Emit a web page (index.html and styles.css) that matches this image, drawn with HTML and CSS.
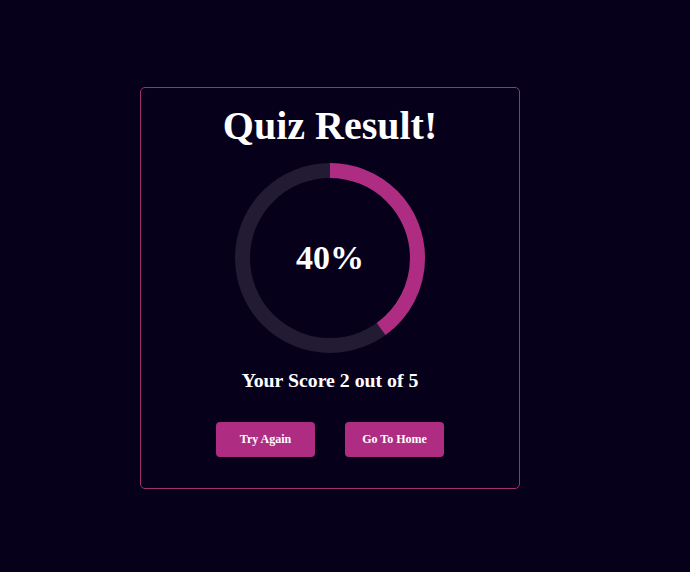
FILE: index.html
```html
<!DOCTYPE html>
<html>
<head>
<meta charset="utf-8">
<link rel="stylesheet" href="styles.css">
</head>
<body>
<div class="page">
  <div class="card">
    <h1 class="title">Quiz Result!</h1>
    <div class="ring">
      <svg width="190" height="190" viewBox="0 0 190 190">
        <circle cx="95" cy="95" r="87.5" fill="none" stroke="#231a33" stroke-width="15"/>
        <circle cx="95" cy="95" r="87.5" fill="none" stroke="#ae2d82" stroke-width="15"
          stroke-dasharray="219.9 549.8" transform="rotate(-90 95 95)"/>
      </svg>
      <span class="pct">40%</span>
    </div>
    <h3 class="score">Your Score 2 out of 5</h3>
    <div class="actions">
      <button class="btn">Try Again</button>
      <button class="btn">Go To Home</button>
    </div>
  </div>
</div>
</body>
</html>
```
FILE: styles.css
```css
html, body {
  margin: 0;
  padding: 0;
  background: #07001b;
  font-family: "Liberation Serif", "Times New Roman", serif;
  color: #ffffff;
}
.page {
  height: 572px;
  display: flex;
  align-items: center;
  padding-left: 140px;
  padding-top: 4px;
  box-sizing: border-box;
}
.card {
  width: 380px;
  height: 402px;
  box-sizing: border-box;
  border: 1.5px solid #a1306f;
  border-radius: 5px;
  display: flex;
  flex-direction: column;
  align-items: center;
  padding-top: 16px;
}
.title {
  margin: 0;
  font-size: 40px;
  line-height: 44px;
  font-weight: bold;
}
.ring {
  margin-top: 15px;
  width: 190px;
  height: 190px;
  position: relative;
  display: flex;
  align-items: center;
  justify-content: center;
}
.ring svg {
  position: absolute;
  left: 0;
  top: 0;
}
.pct {
  position: relative;
  font-size: 34px;
  font-weight: bold;
  line-height: 1;
}
.score {
  margin: 16px 0 0;
  font-size: 19.8px;
  line-height: 22px;
  font-weight: bold;
}
.actions {
  margin-top: 31px;
  display: flex;
  gap: 30px;
}
.btn {
  width: 99px;
  height: 35px;
  border: none;
  border-radius: 4px;
  background: #ae2d82;
  color: #ffffff;
  font-family: "Liberation Serif", "Times New Roman", serif;
  font-weight: bold;
  font-size: 12px;
  padding: 0;
}
```
